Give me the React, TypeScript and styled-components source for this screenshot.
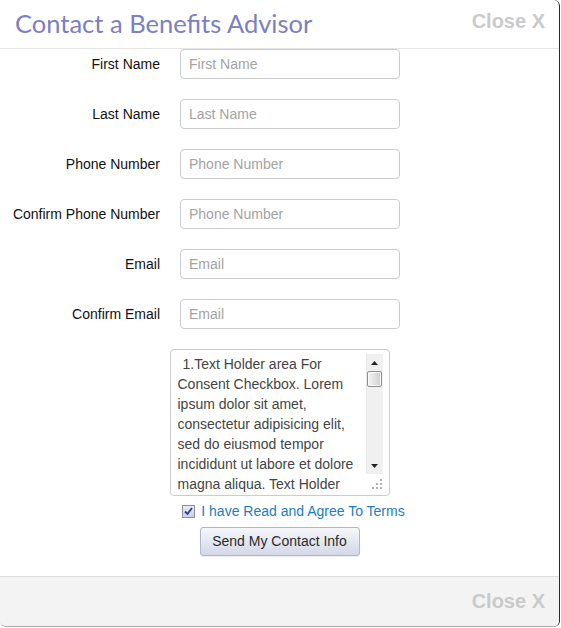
import React from "react";
import styled, { createGlobalStyle } from "styled-components";

const GlobalStyle = createGlobalStyle`
  html, body { margin: 0; padding: 0; background: #ffffff; }
  body { font-family: "Liberation Sans", Arial, sans-serif; }
  * { box-sizing: border-box; }
`;

const Modal = styled.div`
  width: 560px;
  background: #ffffff;
  border-right: 1px solid #2a2a2a;
  border-bottom: 1px solid #a9a9a9;
  border-radius: 0 6px 6px 6px;
  overflow: hidden;
`;

const Header = styled.div`
  height: 49px;
  border-bottom: 1px solid #e5e5e5;
  display: flex;
  align-items: center;
  justify-content: space-between;
  padding: 0 14px 2px 15px;
`;

const Title = styled.h1`
  margin: 0;
  font-family: "Lato", "Open Sans", sans-serif;
  font-weight: 400;
  font-size: 25.5px;
  color: #7b80c0;
`;

const CloseLink = styled.span<{ $top?: boolean }>`
  font-family: "Liberation Sans", Arial, sans-serif;
  font-weight: 700;
  font-size: 20px;
  color: #cacaca;
  cursor: pointer;
  align-self: ${(p) => (p.$top ? "flex-start" : "center")};
  margin-top: ${(p) => (p.$top ? "10px" : "0")};
`;

const Form = styled.form`
  display: flex;
  flex-direction: column;
  align-items: center;
  padding: 0 0 20px;
`;

const Fields = styled.div`
  align-self: flex-start;
  display: grid;
  grid-template-columns: 160px 220px;
  column-gap: 20px;
  row-gap: 20px;
  align-items: center;
`;

const Label = styled.label`
  text-align: right;
  font-size: 14px;
  color: #111;
  white-space: nowrap;
`;

const Input = styled.input`
  width: 220px;
  height: 30px;
  border: 1px solid #cccccc;
  border-radius: 4px;
  padding: 0 8px;
  font-family: "Liberation Sans", Arial, sans-serif;
  font-size: 14px;
  color: #333;
  outline: none;
  &::placeholder { color: #a3a3a3; }
`;

const ConsentBox = styled.div`
  margin-top: 20px;
  width: 220px;
  height: 147px;
  border: 1px solid #cccccc;
  border-radius: 4px;
  padding: 4px 6px 0 7px;
  display: flex;
  overflow: hidden;
  background: #fff;
`;

const ConsentText = styled.div`
  flex: 1;
  height: 141px;
  font-size: 14px;
  line-height: 20px;
  color: #444;
  text-indent: 5px;
  overflow: hidden;
`;

const ScrollCol = styled.div`
  width: 17px;
  display: flex;
  flex-direction: column;
`;

const Track = styled.div`
  height: 120px;
  background: #f0f0f0;
  border-left: 1px solid #e8e8e8;
  display: flex;
  flex-direction: column;
  align-items: center;
`;

const ArrowBtn = styled.div`
  height: 17px;
  width: 100%;
  display: flex;
  align-items: center;
  justify-content: center;
`;

const Thumb = styled.div`
  width: 15px;
  height: 16px;
  border: 1px solid #8e8f8f;
  border-radius: 2px;
  background: linear-gradient(to right, #f4f4f4, #e2e2e2 50%, #cfcfcf);
  box-shadow: inset 0 0 0 1px #fafafa;
`;

const TrackFill = styled.div`
  flex: 1;
`;

const Grip = styled.div`
  flex: 1;
  display: flex;
  align-items: flex-start;
  justify-content: flex-end;
  padding-top: 5px;
  padding-right: 1px;
`;

const AgreeRow = styled.label`
  margin-top: 5px;
  height: 20px;
  display: flex;
  align-items: center;
  gap: 6px;
  padding-left: 28px;
  font-size: 14px;
  line-height: 20px;
  color: #1a7dc8;
  cursor: pointer;
`;

const CheckBox = styled.span`
  flex: none;
  width: 13px;
  height: 13px;
  border: 1px solid #8b8f9f;
  background: linear-gradient(#e8ecf6, #c9d1e6);
  display: flex;
  align-items: center;
  justify-content: center;
`;

const SendButton = styled.button`
  margin-top: 6px;
  width: 160px;
  height: 29px;
  border: 1px solid #b1b6c8;
  border-radius: 3px;
  background: linear-gradient(#f6f7fb, #d3d8e8);
  font-family: "Liberation Sans", Arial, sans-serif;
  font-size: 14px;
  line-height: 27px;
  padding: 0;
  color: #2b2b2b;
  box-shadow: 0 1px 1px rgba(0, 0, 0, 0.08);
  cursor: pointer;
`;

const Footer = styled.div`
  height: 50px;
  border-top: 1px solid #dddddd;
  background: #f3f3f3;
  display: flex;
  align-items: center;
  justify-content: flex-end;
  padding: 0 14px 0 0;
`;

const fields = [
  { label: "First Name", placeholder: "First Name" },
  { label: "Last Name", placeholder: "Last Name" },
  { label: "Phone Number", placeholder: "Phone Number" },
  { label: "Confirm Phone Number", placeholder: "Phone Number" },
  { label: "Email", placeholder: "Email" },
  { label: "Confirm Email", placeholder: "Email" },
];

export default function App() {
  return (
    <>
      <GlobalStyle />
      <Modal>
        <Header>
          <Title>Contact a Benefits Advisor</Title>
          <CloseLink $top>Close X</CloseLink>
        </Header>
        <Form onSubmit={(e) => e.preventDefault()}>
          <Fields>
            {fields.map((f) => (
              <React.Fragment key={f.label}>
                <Label>{f.label}</Label>
                <Input placeholder={f.placeholder} />
              </React.Fragment>
            ))}
          </Fields>
          <ConsentBox>
            <ConsentText>
              1.Text Holder area For Consent Checkbox. Lorem ipsum dolor sit amet, consectetur adipisicing elit, sed do eiusmod tempor incididunt ut labore et dolore magna aliqua. Text Holder
            </ConsentText>
            <ScrollCol>
              <Track>
                <ArrowBtn>
                  <svg width="7" height="4" viewBox="0 0 7 4">
                    <path d="M0 4 L3.5 0 L7 4 Z" fill="#222" />
                  </svg>
                </ArrowBtn>
                <Thumb />
                <TrackFill />
                <ArrowBtn>
                  <svg width="7" height="4" viewBox="0 0 7 4">
                    <path d="M0 0 L7 0 L3.5 4 Z" fill="#222" />
                  </svg>
                </ArrowBtn>
              </Track>
              <Grip>
                <svg width="10" height="10" viewBox="0 0 10 10">
                  <g fill="#b0b0b0">
                    <rect x="8" y="0" width="2" height="2" />
                    <rect x="4" y="4" width="2" height="2" />
                    <rect x="8" y="4" width="2" height="2" />
                    <rect x="0" y="8" width="2" height="2" />
                    <rect x="4" y="8" width="2" height="2" />
                    <rect x="8" y="8" width="2" height="2" />
                  </g>
                </svg>
              </Grip>
            </ScrollCol>
          </ConsentBox>
          <AgreeRow>
            <CheckBox>
              <svg width="9" height="9" viewBox="0 0 9 9">
                <path d="M1 4.5 L3.5 7 L8 1" stroke="#2a3f8f" strokeWidth="1.8" fill="none" />
              </svg>
            </CheckBox>
            <span>I have Read and Agree To Terms</span>
          </AgreeRow>
          <SendButton type="submit">Send My Contact Info</SendButton>
        </Form>
        <Footer>
          <CloseLink>Close X</CloseLink>
        </Footer>
      </Modal>
    </>
  );
}
